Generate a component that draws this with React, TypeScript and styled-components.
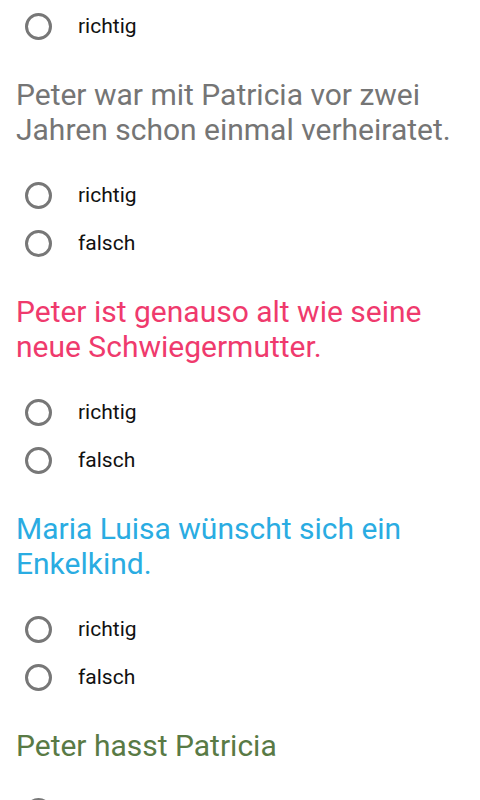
import styled, { createGlobalStyle } from 'styled-components';

const GlobalStyle = createGlobalStyle`
  html, body {
    margin: 0;
    padding: 0;
    background: #ffffff;
  }
  body {
    font-family: Roboto, "Noto Sans", "Liberation Sans", sans-serif;
  }
`;

type Question = {
  id: number;
  text: string;
  color: string;
};

const questions: Question[] = [
  { id: 1, text: 'Peter war mit Patricia vor zwei Jahren schon einmal verheiratet.', color: '#757575' },
  { id: 2, text: 'Peter ist genauso alt wie seine neue Schwiegermutter.', color: '#ef3a6d' },
  { id: 3, text: 'Maria Luisa wünscht sich ein Enkelkind.', color: '#2aace2' },
  { id: 4, text: 'Peter hasst Patricia', color: '#597a45' },
];

const options = ['richtig', 'falsch'];

function RadioOption({ label }: { label: string }) {
  return (
    <Option>
      <Circle />
      <Label>{label}</Label>
    </Option>
  );
}

function App() {
  return (
    <>
      <GlobalStyle />
      <Page>
        <RadioOption label="richtig" />
        {questions.map(({ id, text, color }) => (
          <Block key={id}>
            <QuestionText $color={color}>{text}</QuestionText>
            <Options>
              {options.map((option) => (
                <RadioOption key={option} label={option} />
              ))}
            </Options>
          </Block>
        ))}
      </Page>
    </>
  );
}

const Page = styled.div`
  height: 800px;
  overflow: hidden;
  padding-top: 2px;
  box-sizing: border-box;
`;

const Block = styled.section`
  display: flex;
  flex-direction: column;
`;

const QuestionText = styled.p<{ $color: string }>`
  margin: 0;
  padding: 27px 24px 24px 16px;
  font-size: 30px;
  line-height: 35px;
  color: ${({ $color }) => $color};
`;

const Options = styled.div`
  display: flex;
  flex-direction: column;
`;

const Option = styled.label`
  display: flex;
  align-items: center;
  height: 48px;
  padding-left: 25px;
`;

const Circle = styled.span`
  width: 21px;
  height: 21px;
  border: 3px solid #777777;
  border-radius: 50%;
  flex-shrink: 0;
`;

const Label = styled.span`
  margin-left: 26px;
  font-size: 21px;
  color: #111111;
`;

export default App;
